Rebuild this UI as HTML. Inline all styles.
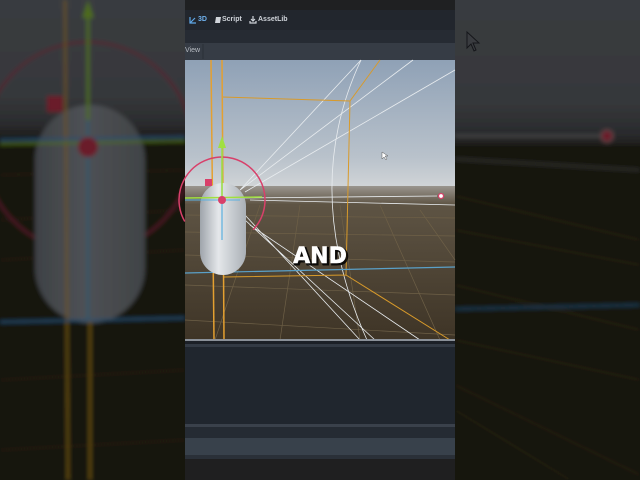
<!DOCTYPE html>
<html><head><meta charset="utf-8"><style>
html,body{margin:0;padding:0;width:640px;height:480px;overflow:hidden;background:#1a1a1a;font-family:"Liberation Sans",sans-serif}
svg{position:absolute;left:0;top:0}
.t{position:absolute;color:#cfd3d9;font-size:7px;font-weight:bold;top:16px}
</style></head><body>
<svg width="640" height="480" viewBox="0 0 640 480">
<defs>
<linearGradient id="ls" x1="0" y1="0" x2="0" y2="1"><stop offset="0" stop-color="#3a3c40"/><stop offset="0.7" stop-color="#36383b"/><stop offset="0.9" stop-color="#2a2b2d"/><stop offset="1" stop-color="#1a1815"/></linearGradient>
<linearGradient id="cs" x1="0" y1="0" x2="0" y2="1"><stop offset="0" stop-color="#8fa1b6"/><stop offset="0.75" stop-color="#b9c2cb"/><stop offset="1" stop-color="#d3d6d8"/></linearGradient>
<linearGradient id="cg" x1="0" y1="0" x2="0" y2="1"><stop offset="0" stop-color="#9a958e"/><stop offset="0.12" stop-color="#5e5444"/><stop offset="1" stop-color="#3e3426"/></linearGradient>
<linearGradient id="cap" x1="0" y1="0" x2="1" y2="0"><stop offset="0" stop-color="#9ea4ab"/><stop offset="0.4" stop-color="#e4e7ea"/><stop offset="1" stop-color="#aab0b6"/></linearGradient>
<linearGradient id="lcap" x1="0" y1="0" x2="1" y2="0"><stop offset="0" stop-color="#3e4145"/><stop offset="0.45" stop-color="#4e5155"/><stop offset="1" stop-color="#404346"/></linearGradient>
<filter id="b" x="-0.1" y="-0.1" width="1.2" height="1.2"><feGaussianBlur stdDeviation="2"/></filter>
</defs>
<!-- left blurred -->
<g filter="url(#b)">
<rect x="-10" y="-10" width="200" height="150" fill="url(#ls)"/>
<rect x="-10" y="138" width="200" height="350" fill="#17140f"/>
<g stroke="#2e271b" stroke-width="1" fill="none"><path d="M0 175 L185 170 M0 220 L185 210 M0 260 L185 250 M0 380 L185 370 M0 450 L185 440"/></g>
<circle cx="88" cy="147" r="105" fill="none" stroke="#5a1c2a" stroke-width="2"/>
<rect x="35" y="105" width="110" height="218" rx="55" fill="url(#lcap)"/>
<line x1="65" y1="0" x2="68" y2="480" stroke="#6e5518" stroke-width="2"/>
<line x1="90" y1="320" x2="90" y2="480" stroke="#6e5518" stroke-width="2"/>
<line x1="88" y1="20" x2="88" y2="320" stroke="#245870" stroke-width="2"/>
<line x1="88" y1="10" x2="88" y2="120" stroke="#4e6a1c" stroke-width="3"/>
<path d="M82 18 L88 0 L94 18 Z" fill="#4e6a1c"/>
<line x1="0" y1="140" x2="185" y2="137" stroke="#245070" stroke-width="2"/>
<line x1="0" y1="144" x2="185" y2="141" stroke="#4e6a1c" stroke-width="2"/>
<line x1="0" y1="322" x2="185" y2="318" stroke="#245070" stroke-width="2"/>
<rect x="47" y="96" width="16" height="16" fill="#6a1a2c"/>
<circle cx="88" cy="147" r="10" fill="#6a1a2c"/>
</g>
<!-- right blurred -->
<g filter="url(#b)">
<rect x="450" y="-10" width="200" height="160" fill="url(#ls)"/>
<rect x="450" y="145" width="200" height="345" fill="#141210"/>
<g stroke="#2e2a1e" stroke-width="1" fill="none"><path d="M455 196 L640 240 M455 230 L640 265 M455 285 L640 330 M455 340 L640 380 M455 385 L640 475 M455 410 L570 480"/></g>
<line x1="455" y1="136" x2="600" y2="136" stroke="#555" stroke-width="1.5"/>
<line x1="455" y1="159" x2="640" y2="170" stroke="#3a3a3a" stroke-width="1.5"/>
<line x1="455" y1="309" x2="640" y2="305" stroke="#234c68" stroke-width="1.5"/>
<circle cx="607" cy="136" r="6" fill="#6a1a2c" stroke="#5a4a4c" stroke-width="1.5"/>
</g>
<path d="M467 32 L467 48 L471 44 L474 51 L476 50 L473 43 L479 43 Z" fill="#3a3c40" stroke="#15161a" stroke-width="1"/>
<!-- center top bars -->
<rect x="185" y="0" width="270" height="10" fill="#1f2022"/>
<rect x="185" y="10" width="270" height="20" fill="#22262d"/>
<rect x="185" y="30" width="270" height="13" fill="#262b33"/>
<rect x="185" y="43" width="270" height="17" fill="#363c45"/>
<line x1="203" y1="44" x2="203" y2="59" stroke="#2a2f36"/>
<!-- center viewport -->
<rect x="185" y="60" width="270" height="130" fill="url(#cs)"/>
<rect x="185" y="186" width="270" height="154" fill="url(#cg)"/>
<g stroke="#6e6047" stroke-width="0.7" fill="none">
<path d="M185 215 L455 218 M185 232 L455 236 M185 255 L455 262 M185 285 L455 295 M185 320 L455 335"/>
<path d="M260 205 L215 340 M300 205 L280 340 M340 205 L360 340 M380 205 L440 340 M420 210 L455 260"/>
</g>
<g stroke="#e8ecef" stroke-width="0.8" fill="none">
<path d="M240 190 L361 60 M240 190 L413 60 M245 192 L455 70"/>
<path d="M245 215 L360 340 M245 220 L375 340 M250 225 L420 340"/>
<path d="M361 60 Q300 190 367 340"/>
<path d="M250 200 L455 205 M240 198 L437 196"/>
</g>
<g stroke="#d89a2a" stroke-width="1" fill="none">
<path d="M222 97 L350 101 L346 275 L224 277 M350 101 L380 60 M346 275 L450 340"/>
</g>
<line x1="211" y1="60" x2="214" y2="340" stroke="#e4a030" stroke-width="1.5"/>
<line x1="222" y1="60" x2="224" y2="340" stroke="#e4a030" stroke-width="1.5"/>
<line x1="185" y1="273" x2="455" y2="267" stroke="#5aa0c8" stroke-width="1.2"/>
<circle cx="222" cy="200" r="43" fill="none" stroke="#d8406a" stroke-width="1.5" stroke-dasharray="190 80" transform="rotate(150 222 200)"/>
<rect x="200" y="183" width="46" height="92" rx="23" fill="url(#cap)"/>
<line x1="222" y1="140" x2="222" y2="240" stroke="#5ab0e0" stroke-width="1.2"/>
<line x1="222" y1="148" x2="222" y2="200" stroke="#a0e040" stroke-width="1.5"/>
<path d="M218 148 L222 136 L226 148 Z" fill="#a0e040"/>
<line x1="185" y1="198" x2="262" y2="197" stroke="#a0e040" stroke-width="1.5"/>
<line x1="185" y1="200" x2="240" y2="200" stroke="#5ab0e0" stroke-width="1"/>
<rect x="205" y="179" width="7" height="7" fill="#d8406a"/>
<circle cx="222" cy="200" r="4" fill="#d8406a"/>
<circle cx="441" cy="196" r="2.5" fill="#fff" stroke="#d8406a" stroke-width="1.2"/>
<path d="M382 152 L382 159 L384 157 L386 160 L387 159 L385 156 L388 156 Z" fill="#fff" stroke="#333" stroke-width="0.4"/>
<text x="320" y="263" text-anchor="middle" font-family="DejaVu Sans,sans-serif" font-weight="bold" font-size="22" fill="#000" opacity="0.85" transform="translate(1.5,1.5)" stroke="#000" stroke-width="2">AND</text>
<text x="320" y="263" text-anchor="middle" font-family="DejaVu Sans,sans-serif" font-weight="bold" font-size="22" fill="#fff" stroke="#fff" stroke-width="0.5">AND</text>
<!-- center bottom -->
<rect x="185" y="339" width="270" height="2" fill="#8a9098"/>
<rect x="185" y="341" width="270" height="3" fill="#1c2027"/>
<rect x="185" y="344" width="270" height="3" fill="#333a44"/>
<rect x="185" y="347" width="270" height="78" fill="#20262e"/>
<rect x="185" y="424" width="270" height="3" fill="#3a414b"/>
<rect x="185" y="427" width="270" height="11" fill="#252b33"/>
<rect x="185" y="438" width="270" height="17" fill="#38414b"/>
<rect x="185" y="455" width="270" height="4" fill="#2a3038"/>
<rect x="185" y="459" width="270" height="21" fill="#1f1f20"/>
<!-- tab icons -->
<path d="M190 17 L190 23 L196 23 M190 23 L195 18" stroke="#5fa8e8" stroke-width="1.2" fill="none"/>
<path d="M216 17 L221 17 L220 23 L215 23 Z" fill="#d0d4da"/>
<path d="M253 16 L253 21 M251 19 L253 21 L255 19 M250 21 L250 23 L256 23 L256 21" stroke="#d0d4da" stroke-width="1.2" fill="none"/>
</svg>
<div class="t" style="left:198px;color:#6fb2ef">3D</div>
<div class="t" style="left:222px">Script</div>
<div class="t" style="left:258px">AssetLib</div>
<div class="t" style="left:185px;top:47px;font-weight:normal;color:#b8bdc4">View</div>
</body></html>
